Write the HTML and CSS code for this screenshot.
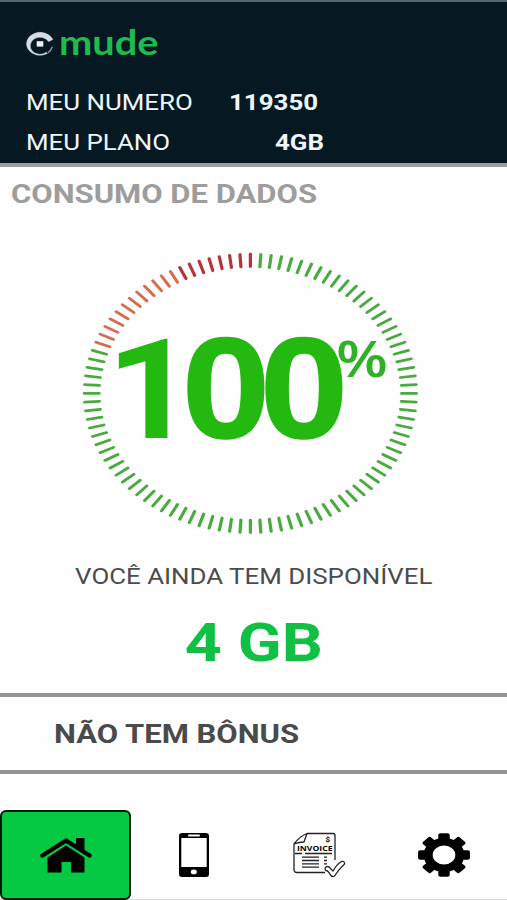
FILE: index.html
```html
<!DOCTYPE html>
<html lang="pt-BR">
<head>
  <meta charset="UTF-8" />
  <meta name="viewport" content="width=device-width, initial-scale=1.0" />
  <title>Mude | Consumo de dados</title>
  <link rel="stylesheet" href="styles.css">
</head>
<body>

  <header>
    <div class="logo">
      <svg class="logo-icon" viewBox="0 0 30 26" width="30" height="26">
        <path d="M27.8 8.6A13.6 11.5 0 1 0 22.3 22.6L21.4 21.3A9.8 8.6 0 1 1 23.6 10.6Z" fill="#d5dce6" stroke="#d5dce6" stroke-width="0.5" />
        <path d="M27.3 15.8Q26 20 22.8 21.8" fill="none" stroke="#8b98a5" stroke-width="1.4" />
        <rect x="11.7" y="10.2" width="6.6" height="5.4" fill="#eef2f6" />
      </svg>
      <span class="logo-name wide">mude</span>
    </div>
    <div class="info-row">
      <span class="label wide">MEU NUMERO</span>
      <b class="number wide">119350</b>
    </div>
    <div class="info-row">
      <span class="label wide">MEU PLANO</span>
      <b class="plan wide">4GB</b>
    </div>
  </header>

  <main>
    <h2><span class="wide">CONSUMO DE DADOS</span></h2>

    <svg class="gauge" viewBox="0 0 507 330" width="507" height="330">
      <g id="ticks" transform="translate(250.4 173.4) scale(1.193 1)"></g>
      <g class="gauge-value">
        <text class="one" x="106" y="218" textLength="90" lengthAdjust="spacingAndGlyphs">1</text>
        <text x="182" y="218" textLength="88" lengthAdjust="spacingAndGlyphs">0</text>
        <text x="260" y="218" textLength="88" lengthAdjust="spacingAndGlyphs">0</text>
      </g>
      <text class="gauge-percent" x="336" y="157" textLength="52" lengthAdjust="spacingAndGlyphs">%</text>
    </svg>

    <p class="available"><span class="wide">VOCÊ AINDA TEM DISPONÍVEL</span></p>
    <p class="amount"><span class="wide">4 GB</span></p>

    <div class="bonus"><span class="wide">NÃO TEM BÔNUS</span></div>
  </main>

  <nav>
    <a class="tab active" href="#">
      <svg viewBox="0 0 52 36" width="52" height="36">
        <path d="M2.5 18.5L26 3.5L49.5 18.5" fill="none" stroke="#000" stroke-width="4.4" stroke-linejoin="round" stroke-linecap="round" />
        <path d="M36 1H44.5V14L36 8.5ZM26 8.5L44.5 20.5V35.5H31V25H21.5V35.5H7.5V20.5Z" />
      </svg>
    </a>
    <a class="tab phone" href="#">
      <svg viewBox="0 0 30 44" width="30" height="44">
        <rect width="30" height="44" rx="3" />
        <rect x="2.3" y="5" width="25.4" height="29" fill="#fff" />
        <rect x="9" y="1.4" width="12" height="2.2" rx="1" fill="#fff" />
        <ellipse cx="14.8" cy="38.9" rx="3" ry="2.4" fill="#fff" />
      </svg>
    </a>
    <a class="tab invoice" href="#">
      <svg viewBox="0 0 53 46" width="53" height="46">
        <g fill="none" stroke="#222" stroke-width="1.3">
          <path d="M14 1.5H40Q42 1.5 42 3.5V28M32 40.5H4Q1 40.5 1 37.5V12Q7 4 14 1.5Q12 7 11 10Q6 10 1 12" />
          <path d="M2 21.5H9M12 21.5H39M9 25.2H26M9 28.5H26M9 31.8H26M9 35.1H26M31 25.2H34M31 28.5H34M31 31.8H34" />
          <path d="M33 35Q35.5 33.5 37.5 36.5L40 39Q44 32 48.5 29.5Q52 29 51.5 32Q46 37 41.5 44Q39.5 45.5 37.5 43Q35 38.5 33 38.5Q31 36.5 33 35Z" fill="#fff" />
        </g>
        <text class="invoice-name" x="4" y="19.3" textLength="35.5" lengthAdjust="spacingAndGlyphs">INVOICE</text>
        <text class="invoice-sign" x="32.5" y="9.6">$</text>
      </svg>
    </a>
    <a class="tab settings" href="#">
      <svg viewBox="-27 -22 54 44" width="54" height="44">
        <g transform="scale(1.19 1)">
          <g id="teeth"></g>
          <circle r="13.3" fill="none" stroke="#000" stroke-width="7.6" />
        </g>
      </svg>
    </a>
  </nav>

  <script>
    const NS = 'http://www.w3.org/2000/svg';

    // 100 marks, counter-clockwise from the top
    const ticks = document.getElementById('ticks');
    for (let i = 0; i < 100; i++) {
      const line = document.createElementNS(NS, 'line');
      line.setAttribute('y1', -139.2);
      line.setAttribute('y2', -126.8);
      line.setAttribute('transform', `rotate(${-i * 3.6})`);
      line.setAttribute('class', i < 8 ? 'tick low' : i < 20 ? 'tick mid' : 'tick');
      ticks.appendChild(line);
    }

    const teeth = document.getElementById('teeth');
    for (let i = 0; i < 8; i++) {
      const tooth = document.createElementNS(NS, 'rect');
      tooth.setAttribute('x', -4.8);
      tooth.setAttribute('y', -21.8);
      tooth.setAttribute('width', 9.6);
      tooth.setAttribute('height', 9);
      tooth.setAttribute('rx', 1.8);
      tooth.setAttribute('transform', `rotate(${i * 45})`);
      teeth.appendChild(tooth);
    }
  </script>
</body>
</html>
```
FILE: styles.css
```css
* {
  box-sizing: border-box;
}

body {
  margin: 0;
  height: 900px;
  display: flex;
  flex-direction: column;
  font-family: Roboto, "Liberation Sans", sans-serif;
  background: #fefefe;
  overflow: hidden;
}

.wide {
  display: inline-block;
  justify-self: start;
  white-space: nowrap;
  transform: scaleX(1.193);
  transform-origin: left center;
}

header {
  height: 167px;
  border-top: 2px solid #56646f;
  border-bottom: 4px solid #9b9c9d;
  background: #061822;
  color: #eef6fb;
}

.logo {
  height: 81px;
  padding-left: 25px;
  display: flex;
  align-items: center;
}

.logo-icon {
  margin-top: 2px;
}

.logo-name {
  margin-left: 4px;
  margin-bottom: 4px;
  font-family: Lato, sans-serif;
  font-weight: 700;
  font-size: 35px;
  line-height: 40px;
  color: #1fbb4f;
  transform: scaleX(1.135);
}

.info-row {
  display: grid;
  grid-template-columns: 203px 1fr;
  padding-left: 26px;
  height: 40px;
  line-height: 40px;
  font-size: 21.7px;
}

.plan {
  margin-left: 46px;
}

main {
  height: 607px;
}

h2 {
  margin: 0;
  height: 53px;
  line-height: 55px;
  padding-left: 11px;
  font-size: 26px;
  color: #9d9d9d;
}

.gauge {
  display: block;
}

.tick {
  stroke: #4aaa40;
  stroke-width: 2.7;
  stroke-linecap: round;
}

.tick.low {
  stroke: #b5343c;
}

.tick.mid {
  stroke: #d66c50;
}

.gauge-value {
  font-family: "Liberation Sans", Arial, sans-serif;
  font-weight: 700;
  font-size: 142px;
  fill: #24b911;
  stroke: #24b911;
  stroke-width: 1.6;
}

.gauge-value .one {
  font-family: Roboto, sans-serif;
  font-size: 140px;
  stroke: none;
}

.gauge-percent {
  font-family: "Open Sans", sans-serif;
  font-weight: 600;
  font-size: 50px;
  fill: #31b127;
}

.available,
.amount {
  margin: 0;
  text-align: center;
}

.available .wide,
.amount .wide {
  transform-origin: center;
}

.available {
  height: 53px;
  line-height: 54px;
  font-size: 21.7px;
  color: #4c4c4c;
}

.amount {
  height: 90px;
  line-height: 79px;
  font-size: 54px;
  font-weight: 700;
  color: #0fc044;
}

.bonus {
  height: 81px;
  border-top: 4px solid #949494;
  border-bottom: 4px solid #949494;
  padding-left: 54px;
  line-height: 74px;
  font-size: 26px;
  font-weight: 700;
  color: #4a4a4a;
}

nav {
  flex: 1;
  display: flex;
  align-items: flex-end;
  border-bottom: 1px solid #dadada;
}

.tab {
  display: flex;
  align-items: center;
  justify-content: center;
  width: 125px;
  height: 89px;
}

.tab.active {
  width: 131px;
  height: 90px;
  margin-bottom: -1px;
  border: 2px solid #001a08;
  border-radius: 6px;
  background: #05c942;
}

.phone svg,
.settings svg {
  margin-left: 1px;
}

.invoice svg {
  margin-left: 2px;
}

.invoice-name {
  font-family: "Open Sans", sans-serif;
  font-size: 7.5px;
  font-weight: 700;
}

.invoice-sign {
  font-size: 8px;
  font-weight: 700;
}
```
